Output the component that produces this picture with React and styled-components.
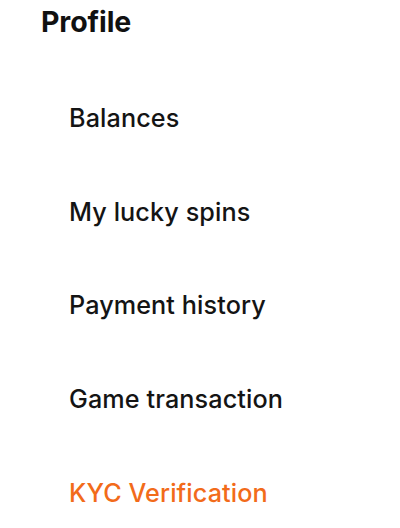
import React from "react";
import styled, { createGlobalStyle } from "styled-components";

const Global = createGlobalStyle`
  html, body { margin: 0; padding: 0; background: #fff; }
  body { font-family: Inter, "Noto Sans", sans-serif; -webkit-font-smoothing: antialiased; }
`;

const Page = styled.div`
  width: 400px;
  height: 528px;
  box-sizing: border-box;
  padding: 4px 0 0 41px;
  display: flex;
  flex-direction: column;
  overflow: hidden;
`;

const Title = styled.h1`
  margin: 0;
  font-size: 28.5px;
  line-height: 36px;
  font-weight: 700;
  color: #111;
  letter-spacing: -0.1px;
`;

const Menu = styled.nav`
  display: flex;
  flex-direction: column;
  padding: 32px 0 0 28px;
`;

const Item = styled.a`
  display: block;
  font-size: 25.2px;
  line-height: 93.7px;
  height: 93.7px;
  font-weight: 550;
  letter-spacing: 0.1px;
  color: ${(p) => (p.$active ? "#f26b1a" : "#141414")};
  text-decoration: none;
  cursor: pointer;
`;

const items = [
  "Balances",
  "My lucky spins",
  "Payment history",
  "Game transaction",
  "KYC Verification",
];

export default function App() {
  return (
    <>
      <Global />
      <Page>
        <Title>Profile</Title>
        <Menu>
          {items.map((t, i) => (
            <Item key={t} $active={i === items.length - 1}>
              {t}
            </Item>
          ))}
        </Menu>
      </Page>
    </>
  );
}
